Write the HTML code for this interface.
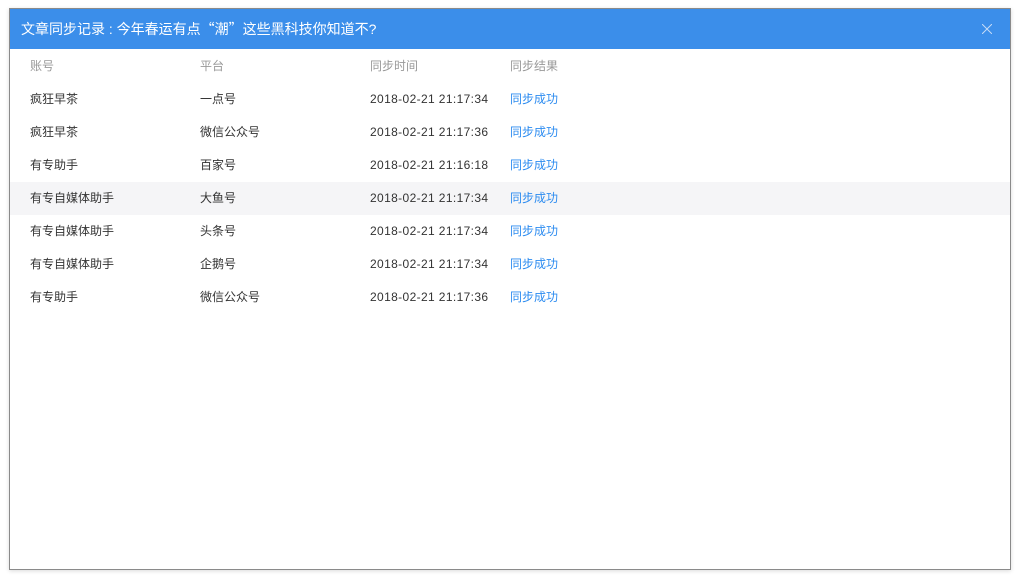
<!DOCTYPE html><html><head><meta charset="utf-8"><style>
body{margin:0;width:1020px;height:582px;background:#fff;font-family:"Liberation Sans","Noto Sans CJK SC",sans-serif;position:relative;overflow:hidden}
.dlg{position:absolute;left:9px;top:8px;width:1000px;height:560px;border:1px solid #8a8a8a;background:#fff;box-shadow:0 1px 4px rgba(0,0,0,.15)}
.hd{height:40px;background:#3b8eea;color:#fff;font-size:14px;line-height:40px;padding-left:11px}
.q{font-family:"Noto Sans CJK SC",sans-serif}
.x{position:absolute;right:18px;top:15px;width:10px;height:10px}
.row{position:absolute;left:0;width:1000px;height:33px;font-size:12px;color:#333;line-height:33px}
.row span{position:absolute}
.c1{left:20px}.c2{left:190px}.c3{left:360px;letter-spacing:0.37px}.c4{left:500px;color:#2d8cf0}
.th{color:#999}.th .c4{color:#999}.th .c3{letter-spacing:0}
.hl{background:#f5f5f7}
</style></head><body><div class="dlg">
<div class="hd">文章同步记录 : 今年春运有点<span class="q">“</span>潮<span class="q">”</span>这些黑科技你知道不?</div>
<svg class="x" viewBox="0 0 10 10"><path d="M0 0L10 10M10 0L0 10" stroke="#c6dbf6" stroke-width="1"/></svg>
<div class="row th" style="top:40px;line-height:34px"><span class="c1">账号</span><span class="c2">平台</span><span class="c3">同步时间</span><span class="c4">同步结果</span></div>
<div class="row" style="top:74px"><span class="c1">疯狂早茶</span><span class="c2">一点号</span><span class="c3">2018-02-21 21:17:34</span><span class="c4">同步成功</span></div>
<div class="row" style="top:107px"><span class="c1">疯狂早茶</span><span class="c2">微信公众号</span><span class="c3">2018-02-21 21:17:36</span><span class="c4">同步成功</span></div>
<div class="row" style="top:140px"><span class="c1">有专助手</span><span class="c2">百家号</span><span class="c3">2018-02-21 21:16:18</span><span class="c4">同步成功</span></div>
<div class="row hl" style="top:173px"><span class="c1">有专自媒体助手</span><span class="c2">大鱼号</span><span class="c3">2018-02-21 21:17:34</span><span class="c4">同步成功</span></div>
<div class="row" style="top:206px"><span class="c1">有专自媒体助手</span><span class="c2">头条号</span><span class="c3">2018-02-21 21:17:34</span><span class="c4">同步成功</span></div>
<div class="row" style="top:239px"><span class="c1">有专自媒体助手</span><span class="c2">企鹅号</span><span class="c3">2018-02-21 21:17:34</span><span class="c4">同步成功</span></div>
<div class="row" style="top:272px"><span class="c1">有专助手</span><span class="c2">微信公众号</span><span class="c3">2018-02-21 21:17:36</span><span class="c4">同步成功</span></div>
</div></body></html>
